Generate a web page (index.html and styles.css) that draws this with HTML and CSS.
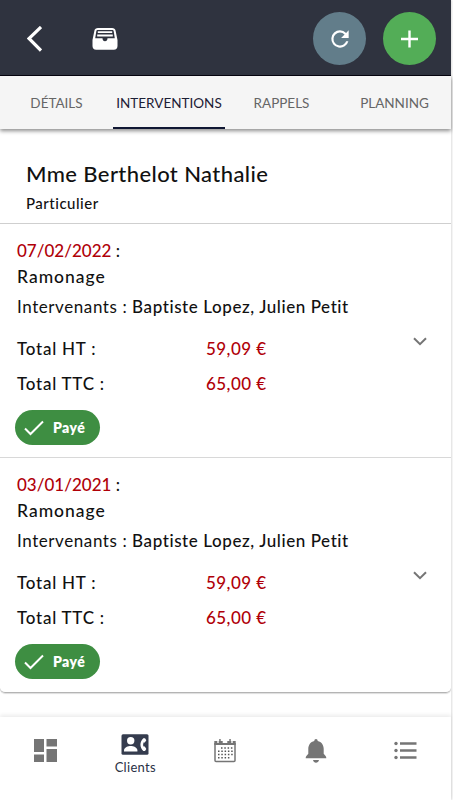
FILE: index.html
```
<!DOCTYPE html>
<html lang="fr">
<head>
  <meta charset="utf-8">
  <meta name="viewport" content="width=device-width, initial-scale=1">
  <title>Clients</title>
  <link rel="stylesheet" href="styles.css">
</head>
<body>
  <div class="app">
    <header class="header">
      <a class="back" href="#"><svg width="15" height="26" viewBox="0 0 15 26"><path d="M14 1L2 12.500 14 24.500" fill="none" stroke="#fff" stroke-width="3.200"/></svg></a>
      <a class="archive" href="#"><svg width="26" height="22" viewBox="0 0 26 22">
        <path fill="#fff" fill-rule="evenodd" d="M6 0h14c2 0 3.200 1 3.600 2.800L25.500 12v6c0 2.400-1.300 3.700-3.700 3.700H4.200C1.800 21.700.500 20.400.500 18v-6L2.400 2.800C2.800 1 4 0 6 0zM5.700 2c-.8 0-1.200.4-1.400 1.200L3.200 10.300h7.300c0 1.900 1 3 2.500 3s2.500-1.100 2.500-3h7.300l-1.100-7.100c-.2-.8-.6-1.200-1.400-1.200z"/>
        <path d="M5.800 4.200h14.400M5.200 7.500h15.600" stroke="#fff" stroke-width="1.800"/>
      </svg></a>
      <button class="round refresh"><svg width="26" height="26" viewBox="0 0 24 24"><path fill="#fff" d="M17.650 6.350A7.960 7.960 0 0 0 12 4a8 8 0 1 0 7.730 10h-2.080A6 6 0 1 1 12 6c1.660 0 3.140.69 4.220 1.780L13 11h7V4z"/></svg></button>
      <button class="round add"><svg width="18" height="18" viewBox="0 0 18 18"><path d="M8.500 .5v17M0 9h17" stroke="#fff" stroke-width="2.400"/></svg></button>
    </header>

    <nav class="tabs">
      <a href="#">DÉTAILS</a>
      <a href="#" class="active">INTERVENTIONS</a>
      <a href="#">RAPPELS</a>
      <a href="#">PLANNING</a>
    </nav>

    <main>
      <section class="client">
        <h1>Mme Berthelot Nathalie</h1>
        <p>Particulier</p>
      </section>

      <section class="interventions">
        <article class="intervention">
          <div class="date"><span class="red">07/02/2022</span> :</div>
          <div class="type">Ramonage</div>
          <div class="people"><span class="label">Intervenants :</span> <span class="names">Baptiste Lopez, Julien Petit</span></div>
          <div class="total"><span>Total HT :</span><span class="red">59,09 €</span></div>
          <div class="total"><span>Total TTC :</span><span class="red">65,00 €</span></div>
          <div class="chip"><svg width="20" height="16" viewBox="0 0 20 16"><path d="M1 8.500L6.500 14 19 1.500" fill="none" stroke="#fff" stroke-width="2"/></svg><span>Payé</span></div>
          <svg class="chevron" width="14" height="9" viewBox="0 0 14 9"><path d="M1 1.200l6 6 6-6" fill="none" stroke="#757575" stroke-width="2"/></svg>
        </article>
        <article class="intervention">
          <div class="date"><span class="red">03/01/2021</span> :</div>
          <div class="type">Ramonage</div>
          <div class="people"><span class="label">Intervenants :</span> <span class="names">Baptiste Lopez, Julien Petit</span></div>
          <div class="total"><span>Total HT :</span><span class="red">59,09 €</span></div>
          <div class="total"><span>Total TTC :</span><span class="red">65,00 €</span></div>
          <div class="chip"><svg width="20" height="16" viewBox="0 0 20 16"><path d="M1 8.500L6.500 14 19 1.500" fill="none" stroke="#fff" stroke-width="2"/></svg><span>Payé</span></div>
          <svg class="chevron" width="14" height="9" viewBox="0 0 14 9"><path d="M1 1.200l6 6 6-6" fill="none" stroke="#757575" stroke-width="2"/></svg>
        </article>
      </section>
    </main>

    <nav class="bottom">
      <a href="#"><svg width="23" height="23" viewBox="0 0 23 23"><path fill="#757575" d="M0 0h10v13H0zM12.500 0H23v7.500H12.500zM0 15.500h10V23H0zM12.500 10H23v13H12.500z"/></svg></a>
      <a href="#" class="active">
        <svg width="28" height="21" viewBox="0 0 28 21">
          <rect x=".5" y=".3" width="27" height="20.400" rx="1.500" fill="#353c4e"/>
          <circle cx="9.700" cy="6.800" r="3.700" fill="#fff"/>
          <path fill="#fff" d="M3 17.500v-1.200c0-2.900 4.200-4.300 6.700-4.300s6.700 1.400 6.700 4.300v1.200z"/>
          <path fill="#fff" d="M22.300 4.200h1.700l1.300 2-1.500 2.200h-1.300a6.500 6.500 0 0 0 0 4.200h1.300l1.500 2.300-1.300 2h-1.700c-3.800-3.700-3.800-9 0-12.700z"/>
        </svg>
        <span>Clients</span>
      </a>
      <a href="#"><svg class="calendar" width="22" height="24" viewBox="0 0 22 24">
        <path d="M1 4v17.500q0 1 1 1h18q1 0 1-1V4" fill="none" stroke="#757575" stroke-width="1.500"/>
        <path fill="#757575" d="M.3 2h3v2h1.400V2h4v2h4.600V2h4v2h1.400V2h3v4H.3zM5.200 0h1.500v3.500H5.200zM15.300 0h1.500v3.500h-1.500z"/>
        <path d="M7 9h12M4 12.200h15M4 15.500h15M4 18.800h12" stroke="#555" stroke-width="1.500" stroke-dasharray="1.500 1.800"/>
      </svg></a>
      <a href="#"><svg width="22" height="24" viewBox="0 0 22 24"><path fill="#757575" d="M11 0c1 0 1.700.8 1.700 1.900 3.800.9 6 4 6 7.900v5l1.700 1.900c.5.600.9 1.300.9 2.500H.7c0-1.200.4-1.900.9-2.500l1.700-1.900v-5c0-3.900 2.200-7 6-7.900C9.300.800 10 0 11 0zM8 21h6c-.4 1.700-1.600 2.700-3 2.700S8.400 22.700 8 21z"/></svg></a>
      <a href="#"><svg width="23" height="19" viewBox="0 0 23 19"><path d="M6 2.500h16.500M6 9.500h16.500M6 16.500h16.500" stroke="#757575" stroke-width="2.400"/><g fill="#757575"><circle cx="2" cy="2.500" r="1.700"/><circle cx="2" cy="9.500" r="1.700"/><circle cx="2" cy="16.500" r="1.700"/></g></svg></a>
    </nav>
  </div>
</body>
</html>
```
FILE: styles.css
```
* {
  box-sizing: border-box;
  font-family: "Lato", sans-serif;
}
body {
  margin: 0;
  background: #fff;
}
a {
  color: inherit;
  text-decoration: none;
}
svg {
  display: block;
}
h1, p {
  margin: 0;
  font-weight: 500;
}
.app {
  display: flex;
  flex-direction: column;
  width: 451px;
  height: 800px;
  color: #111;
  box-shadow: 1px 0 2px #ddd;
}
.header {
  display: flex;
  align-items: center;
  flex: none;
  height: 76px;
  padding: 2px 15px 0 27px;
  background: #2f333f;
  border-bottom: 1px solid #05040f;
}
.archive {
  margin-left: 50px;
}
.round {
  display: flex;
  align-items: center;
  justify-content: center;
  width: 53px;
  height: 53px;
  padding: 0;
  border: 0;
  border-radius: 50%;
}
.refresh {
  margin-left: auto;
  background: #627d8a;
}
.add {
  margin-left: 17px;
  background: #53ad57;
}
.tabs {
  display: grid;
  grid-template-columns: 113px 112px 113px 113px;
  flex: none;
  height: 53px;
  background: #f5f5f5;
  box-shadow: 0 2px 4px rgba(0, 0, 0, 0.45);
  font-size: 13.5px;
  color: #666;
}
.tabs a {
  display: flex;
  align-items: center;
  justify-content: center;
  padding-top: 2px;
  border-bottom: 2px solid transparent;
}
.tabs .active {
  color: #1c2036;
  border-color: #101733;
}
main {
  flex: 1;
}
.client {
  height: 95px;
  padding: 30px 26px 0;
  border-bottom: 1px solid #cfcfcf;
}
.client h1 {
  font-size: 22px;
  line-height: 30px;
  letter-spacing: 0.4px;
}
.client p {
  margin-top: 3px;
  font-size: 15px;
  line-height: 22px;
  letter-spacing: 0.5px;
}
.interventions {
  border-bottom: 1px solid #b4b4b4;
  border-radius: 0 0 5px 5px;
  box-shadow: 0 1px 1px #ddd;
}
.intervention {
  position: relative;
  height: 234px;
  padding: 14px 17px 0;
  border-bottom: 1px solid #d8d8d8;
  font-size: 17px;
  font-weight: 500;
  line-height: 26px;
}
.intervention:last-child {
  border-bottom: 0;
}
.red {
  color: #b00008;
}
.type {
  font-size: 17.5px;
  letter-spacing: 1px;
}
.people {
  margin-top: 4px;
  letter-spacing: 0.58px;
}
.label {
  font-weight: 400;
}
.total {
  display: grid;
  grid-template-columns: 189px 1fr;
  height: 35px;
  line-height: 35px;
  letter-spacing: 0.75px;
}
.total .red {
  letter-spacing: 0.45px;
}
.people + .total {
  margin-top: 11px;
}
.chip {
  display: flex;
  align-items: center;
  width: 85px;
  height: 35px;
  margin: 9px 0 0 -2px;
  padding-left: 9px;
  border-radius: 18px;
  background: #3e8e42;
  color: #fff;
  font-size: 14px;
  font-weight: 800;
  letter-spacing: 0.4px;
}
.chip span {
  margin-left: 9px;
}
.chevron {
  position: absolute;
  right: 24px;
  top: 113px;
}
.bottom {
  display: grid;
  grid-template-columns: repeat(5, 1fr);
  flex: none;
  height: 83px;
  padding-bottom: 16px;
  box-shadow: 0 -2px 4px rgba(0, 0, 0, 0.08);
}
.bottom a {
  display: flex;
  flex-direction: column;
  align-items: center;
  justify-content: center;
}
.bottom .active {
  padding-top: 9px;
  color: #2a3145;
  font-size: 13px;
  letter-spacing: 0.3px;
}
.bottom span {
  margin-top: 4px;
  line-height: 17px;
}
```
